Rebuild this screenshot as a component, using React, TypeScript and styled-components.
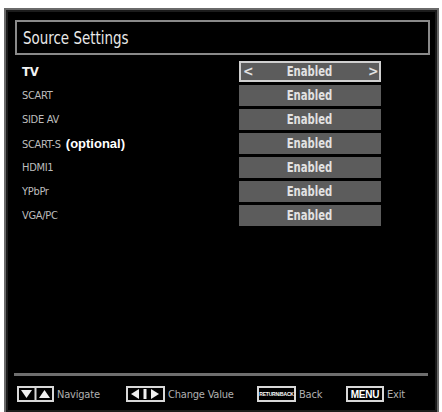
import React from "react";
import styled, { createGlobalStyle } from "styled-components";

const GlobalStyle = createGlobalStyle`
  html, body {
    margin: 0;
    padding: 0;
    background: #fff;
  }
  body {
    font-family: "DejaVu Sans", "Liberation Sans", sans-serif;
  }
`;

const narrow = `"DejaVu Sans Condensed", "Liberation Sans Narrow", "Roboto Condensed", "DejaVu Sans", sans-serif`;

const Page = styled.div`
  width: 442px;
  height: 412px;
  padding: 8px 3px 0 4px;
  box-sizing: border-box;
  background: #fff;
`;

const Screen = styled.div`
  height: 404px;
  box-sizing: border-box;
  background: #000;
  border: 2px solid #6a6a6a;
  border-bottom: none;
  box-shadow: inset 0 0 0 2px #1c1c1c;
  padding: 10px 7px 0 9px;
  display: flex;
  flex-direction: column;
`;

const TitleBox = styled.div`
  height: 35px;
  box-sizing: border-box;
  border: 2px solid #8a8a8a;
  display: flex;
  align-items: center;
  padding: 0 0 1px 6px;
  font-family: ${narrow};
  font-stretch: condensed;
  font-size: 18px;
  color: #e8e8e8;
`;

const Squeezed = styled.span<{ $scale: number }>`
  display: inline-block;
  transform: scaleX(${(p) => p.$scale});
  white-space: nowrap;
`;

const TitleText = styled(Squeezed)`
  transform-origin: left center;
`;

const List = styled.div`
  margin-top: 6px;
  display: flex;
  flex-direction: column;
  gap: 3px;
  flex: 1;
`;

const Row = styled.div`
  display: grid;
  grid-template-columns: 224px 142px;
  align-items: center;
  height: 21px;
`;

const Label = styled.div<{ $active?: boolean }>`
  padding-left: 7px;
  font-family: ${narrow};
  font-stretch: condensed;
  font-size: ${(p) => (p.$active ? "13px" : "11px")};
  font-weight: ${(p) => (p.$active ? 700 : 400)};
  color: ${(p) => (p.$active ? "#f2f2f2" : "#bdbdbd")};
  letter-spacing: -0.3px;
  white-space: nowrap;
`;

const Note = styled.span`
  font-family: "Liberation Sans", Arial, sans-serif;
  font-weight: 700;
  font-size: 13px;
  color: #fff;
  letter-spacing: 0;
  margin-left: 5px;
`;

const Value = styled.div<{ $active?: boolean }>`
  height: 21px;
  box-sizing: border-box;
  background: #5c5c5c;
  border: ${(p) => (p.$active ? "2px solid #d0d0d0" : "none")};
  display: flex;
  align-items: center;
  justify-content: space-between;
  padding: 0 3px 1px 2px;
  font-family: ${narrow};
  font-stretch: condensed;
  font-size: 14px;
  font-weight: 700;
  color: #e2e2e2;
`;

const Arrow = styled.span<{ $hidden?: boolean }>`
  width: 8px;
  font-size: 14px;
  visibility: ${(p) => (p.$hidden ? "hidden" : "visible")};
`;

const Footer = styled.div`
  border-top: 3px solid #6e6e6e;
  margin: 0 2px 0 -1px;
  height: 36px;
  display: flex;
  align-items: center;
  padding-left: 3px;
  font-family: ${narrow};
  font-stretch: condensed;
  font-size: 11px;
  color: #b0b0b0;
  letter-spacing: -0.2px;
`;

const Hint = styled.div<{ $width: number }>`
  width: ${(p) => p.$width}px;
  display: flex;
  align-items: center;
  gap: 3px;
`;

const KeyBox = styled.div<{ $w: number }>`
  width: ${(p) => p.$w}px;
  height: 16px;
  box-sizing: border-box;
  border: 2px solid #d8d8d8;
  display: flex;
  align-items: center;
  justify-content: center;
  color: #fff;
`;

const MenuText = styled.span`
  font-family: "Liberation Sans", Arial, sans-serif;
  font-weight: 700;
  font-size: 10px;
  letter-spacing: -0.2px;
`;

const ReturnText = styled.span`
  font-family: "Liberation Sans", Arial, sans-serif;
  font-weight: 700;
  font-size: 5px;
  color: #fff;
`;

const rows = ["TV", "SCART", "SIDE AV", "SCART-S", "HDMI1", "YPbPr", "VGA/PC"];

const NavIcon = () => (
  <svg width="37" height="16" viewBox="0 0 37 16">
    <rect x="1" y="1" width="35" height="14" fill="none" stroke="#d8d8d8" strokeWidth="2" />
    <line x1="18.5" y1="1" x2="18.5" y2="15" stroke="#d8d8d8" strokeWidth="2" />
    <polygon points="4,4 15,4 9.5,12" fill="#f0f0f0" />
    <polygon points="22,12 33,12 27.5,4" fill="#f0f0f0" />
  </svg>
);

const ChangeIcon = () => (
  <svg width="39" height="16" viewBox="0 0 39 16">
    <rect x="1" y="1" width="37" height="14" fill="none" stroke="#d8d8d8" strokeWidth="2" />
    <polygon points="13,3 13,13 5,8" fill="#f0f0f0" />
    <rect x="17.5" y="3" width="3" height="10" fill="#f0f0f0" />
    <polygon points="25,3 25,13 33,8" fill="#f0f0f0" />
  </svg>
);

export default function App() {
  return (
    <Page>
      <GlobalStyle />
      <Screen>
        <TitleBox>
          <TitleText $scale={0.83}>Source Settings</TitleText>
        </TitleBox>
        <List>
          {rows.map((name, i) => (
            <Row key={name}>
              <Label $active={i === 0}>
                {name}
                {name === "SCART-S" && <Note>(optional)</Note>}
              </Label>
              <Value $active={i === 0}>
                <Arrow $hidden={i !== 0}>&lt;</Arrow>
                <Squeezed $scale={0.8}>Enabled</Squeezed>
                <Arrow $hidden={i !== 0}>&gt;</Arrow>
              </Value>
            </Row>
          ))}
        </List>
        <Footer>
          <Hint $width={109}>
            <NavIcon />
            Navigate
          </Hint>
          <Hint $width={131}>
            <ChangeIcon />
            Change Value
          </Hint>
          <Hint $width={89}>
            <KeyBox $w={39}>
              <ReturnText>RETURN/BACK</ReturnText>
            </KeyBox>
            Back
          </Hint>
          <Hint $width={70}>
            <KeyBox $w={38}>
              <MenuText>MENU</MenuText>
            </KeyBox>
            Exit
          </Hint>
        </Footer>
      </Screen>
    </Page>
  );
}
